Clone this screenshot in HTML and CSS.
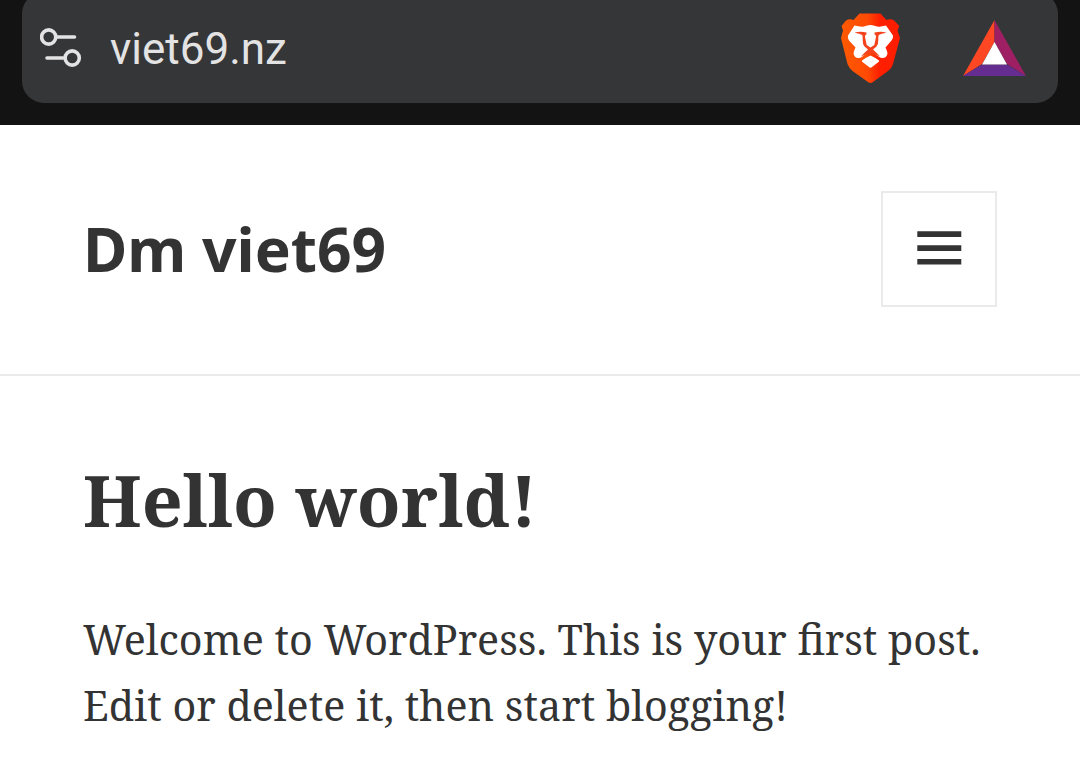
FILE: index.html
```html
<!DOCTYPE html>
<html lang="en">
<head>
  <meta charset="UTF-8" />
  <meta name="viewport" content="width=device-width, initial-scale=1.0"/>
  <title>Dm viet69</title>
  <link rel="stylesheet" href="styles.css">
</head>
<body>
  <div class="browser-bar">
    <div class="address">
      <svg class="site-icon" width="42" height="40" viewBox="0 0 42 40" fill="none" stroke="#e3e3e3" stroke-width="3.6" stroke-linecap="round">
        <circle cx="8.7" cy="9" r="7.1"/>
        <path d="M17 9H34.5M7 30H23"/>
        <circle cx="32.2" cy="30" r="7.1"/>
      </svg>
      <span class="url">viet69.nz</span>
      <svg class="brave-icon" width="60" height="72" viewBox="0 0 60 72">
        <defs>
          <linearGradient id="brave" x1="0" x2="1" y1="0" y2="0">
            <stop offset="0" stop-color="#ff5a00"/>
            <stop offset=".45" stop-color="#ff4a05"/>
            <stop offset=".65" stop-color="#ff2000"/>
            <stop offset="1" stop-color="#ff1c00"/>
          </linearGradient>
        </defs>
        <path fill="url(#brave)" d="M19.500 1.500H40.500L46.500 8Q51 6.500 54 8.500L59.300 14L57.500 18.500L60 26L53 52Q52 56 48 59L33 70Q30.500 72 28 70L12.500 59Q9 56 7.500 52L1 26L3 18.500L1.500 14L6 8.500Q9.500 6.500 13.500 8Z"/>
        <path fill="#fff" d="M14.500 13.500Q20 15 24 14.500Q30.300 11.500 37 14.500Q41 15 46 13.500L53 23.500Q53.500 26 51.500 28.500L45.500 35.500Q47 38.500 47.500 41Q47 46 42.500 46Q40.500 46 38.500 44.500L30.500 38.500L22.500 44.500Q20.500 46 18.500 46Q14 46 13.500 41Q14 38.500 15.500 35.500L9 28.500Q7.300 26 8 23.500Z"/>
        <path fill="#f4431c" d="M14.500 20.700Q20 18.800 26.500 20.600V22.300Q24.700 23 25 25L26.700 33L30.500 35.500L34.300 33L36 25Q36.300 23 34.500 22.300V20.600Q41 18.800 46.500 20.700Q41 21.800 38.800 23Q38 25 38.300 28Q38.500 32 36.500 34.500L33 37.500Q37 41 40 44.500Q34 41.500 30.500 41.300Q27 41.500 21 44.500Q24 41 28 37.500L24.500 34.500Q22.500 32 22.700 28Q23 25 22.200 23Q20 21.800 14.500 20.700Z"/>
        <path fill="#fff" d="M30.500 43.500Q35 45.500 39 48.500Q39.500 49.500 38.500 50L32 55Q30.500 56.500 29 55L22.500 50Q21.500 49.500 22 48.500Q26 45.500 30.500 43.500Z"/>
      </svg>
      <svg class="bat-icon" width="63" height="56" viewBox="0 0 63 56">
        <path fill="#ff4724" d="M31.500 0V22L19 44L0 56Z"/>
        <path fill="#9e1f63" d="M31.500 0L63 56L44 44L31.500 22Z"/>
        <path fill="#662d91" d="M0 56L19 44.500H44L63 56Z"/>
        <path fill="#fff" d="M31.500 22L44 44.500H19Z"/>
      </svg>
    </div>
  </div>

  <header class="site-header">
    <h1 class="site-title">Dm viet69</h1>
    <button class="menu-toggle" aria-label="Menu">
      <svg width="45" height="34" viewBox="0 0 45 34" fill="#333">
        <path d="M.3 .3H44.300V6H.3ZM.3 14.300H44.300V20H.3ZM.3 28H44.300V33.600H.3Z"/>
      </svg>
    </button>
  </header>

  <main class="post">
    <h2 class="entry-title">Hello world!</h2>
    <p class="entry-content">Welcome to WordPress. This is your first post. Edit or delete it, then start blogging!</p>
  </main>
</body>
</html>
```

FILE: styles.css
```css
* {
  box-sizing: border-box;
}

body {
  margin: 0;
  background-color: #fff;
  color: #333;
  font-family: "Noto Serif", "Liberation Serif", serif;
}

.browser-bar {
  height: 125px;
  padding: 0 22px 22px;
  background-color: #131313;
  overflow: hidden;
}

.address {
  display: flex;
  align-items: center;
  height: 111px;
  margin-top: -8px;
  padding: 0 32px 0 18px;
  border-radius: 22px;
  background-color: #353638;
}

.url {
  margin-left: 28px;
  padding-top: 2px;
  color: #e3e3e3;
  font-family: Roboto, sans-serif;
  font-size: 44px;
}

.brave-icon {
  margin-left: auto;
}

.bat-icon {
  margin-left: 63px;
}

.site-header {
  display: flex;
  justify-content: space-between;
  align-items: center;
  height: 251px;
  padding: 0 83px 2px;
  border-bottom: 2px solid #eaeaea;
}

.site-title {
  margin: 0;
  font-family: "Noto Sans", sans-serif;
  font-size: 60.5px;
  font-weight: bold;
  line-height: 84px;
}

.menu-toggle {
  display: flex;
  justify-content: center;
  align-items: center;
  width: 116px;
  height: 116px;
  padding: 0 0 1px;
  border: 2px solid #eaeaea;
  background: #fff;
}

.post {
  padding: 80px 83px 0;
}

.entry-title {
  margin: 0;
  font-size: 71.6px;
  line-height: 86px;
}

.entry-content {
  margin: 64px 0 0;
  font-size: 41.25px;
  line-height: 66px;
}
```
